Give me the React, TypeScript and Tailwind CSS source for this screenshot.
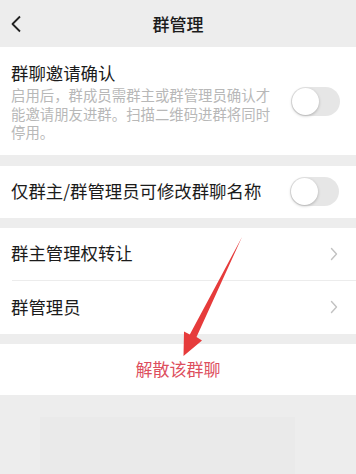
import React from "react";

const font = { fontFamily: '"Noto Sans CJK SC", "Noto Sans", sans-serif' };

function Toggle() {
  return (
    <div className="relative h-[29px] w-[49px] shrink-0 rounded-full bg-[#e6e6e6]">
      <div className="absolute left-[1px] top-[1px] h-[27px] w-[27px] rounded-full bg-white shadow-[0_1px_3px_rgba(0,0,0,0.25)]" />
    </div>
  );
}

function Chevron() {
  return (
    <svg width="8" height="14" viewBox="0 0 8 14" className="shrink-0">
      <polyline
        points="1.5,1.5 6.5,7 1.5,12.5"
        fill="none"
        stroke="#c2c2c2"
        strokeWidth="1.4"
        strokeLinecap="round"
        strokeLinejoin="round"
      />
    </svg>
  );
}

export default function App() {
  return (
    <div
      className="relative h-[474px] w-[356px] overflow-hidden bg-[#ededed] text-[#1b1b1b]"
      style={font}
    >
      {/* Header */}
      <div className="relative flex h-[47px] items-center justify-center">
        <svg
          width="12"
          height="18"
          viewBox="0 0 12 18"
          className="absolute left-[10px] top-[15px]"
        >
          <polyline
            points="10,1.5 2.5,9 10,16.5"
            fill="none"
            stroke="#222"
            strokeWidth="1.8"
            strokeLinejoin="round"
          />
        </svg>
        <span className="text-[17px] font-medium leading-none">群管理</span>
      </div>

      {/* Invite confirm */}
      <div className="flex items-center justify-between bg-white pb-[13px] pl-[11px] pr-[16px] pt-[14px]">
        <div className="w-[262px]">
          <div className="text-[17.4px] leading-[24px]">群聊邀请确认</div>
          <div className="mt-[1px] text-[14.4px] leading-[18.5px] text-[#b8b8b8]">
            启用后，群成员需群主或群管理员确认才能邀请朋友进群。扫描二维码进群将同时停用。
          </div>
        </div>
        <Toggle />
      </div>

      {/* Rename only admin */}
      <div className="mt-[11px] flex h-[52px] items-center justify-between bg-white pl-[11px] pr-[17px]">
        <span className="text-[17.4px]">仅群主/群管理员可修改群聊名称</span>
        <Toggle />
      </div>

      {/* Links */}
      <div className="mt-[10px] bg-white">
        <div className="flex h-[52px] items-center justify-between pl-[11px] pr-[18px]">
          <span className="text-[17.4px]">群主管理权转让</span>
          <Chevron />
        </div>
        <div className="ml-[12px] h-px bg-[#ececec]" />
        <div className="flex h-[53px] items-center justify-between pl-[11px] pr-[18px]">
          <span className="text-[17.4px]">群管理员</span>
          <Chevron />
        </div>
      </div>

      {/* Dissolve */}
      <div className="mt-[10px] flex h-[51px] items-center justify-center bg-white">
        <span className="text-[17px] text-[#dd4f5e]">解散该群聊</span>
      </div>

      <div className="ml-[40px] mt-[22px] h-[80px] w-[255px] bg-[#eaeaea]" />

      {/* Annotation arrow */}
      <svg
        width="356"
        height="474"
        viewBox="0 0 356 474"
        className="pointer-events-none absolute left-0 top-0"
      >
        <polygon
          points="242,237 196.5,337 202,340.5 183.5,356 184,331.5 189.8,334.5"
          fill="#e63b3b"
        />
      </svg>
    </div>
  );
}
